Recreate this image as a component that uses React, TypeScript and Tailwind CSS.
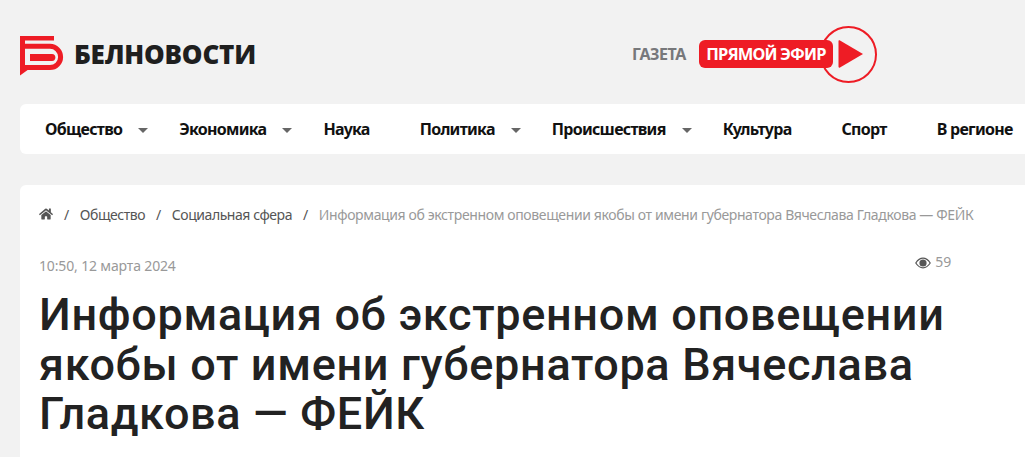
import { FaHome } from 'react-icons/fa';

const navItems = [
  { label: 'Общество', arrow: true },
  { label: 'Экономика', arrow: true },
  { label: 'Наука', arrow: false },
  { label: 'Политика', arrow: true },
  { label: 'Происшествия', arrow: true },
  { label: 'Культура', arrow: false },
  { label: 'Спорт', arrow: false },
  { label: 'В регионе', arrow: false },
];

function Logo() {
  return (
    <svg width="45" height="42" viewBox="0 0 45 42" className="mt-[3px] shrink-0">
      <path d="M0 1H34V5.5H5V34.7H8L0 40.5Z" fill="#ee1c25" />
      <path d="M5 11.3H30A10.6 10.6 0 0 1 30 32.5H5" fill="none" stroke="#ee1c25" strokeWidth="5" />
      <path d="M10 19H32C36.5 19 36.5 26 32 26H10Z" fill="#ee1c25" />
    </svg>
  );
}

function EyeIcon() {
  return (
    <svg width="16" height="12" viewBox="0 0 16 12" className="shrink-0">
      <path d="M0.8 6C3 2.6 5.3 1.2 8 1.2S13 2.6 15.2 6C13 9.4 10.7 10.8 8 10.8S3 9.4 0.8 6Z" fill="none" stroke="#555" strokeWidth="1.2" />
      <circle cx="8" cy="6" r="3.6" fill="#555" />
    </svg>
  );
}

export default function App() {
  return (
    <div className="h-[457px] overflow-hidden bg-[#f2f2f2] pl-5 font-['Noto_Sans',sans-serif]">
      <header className="flex h-[104px] items-center">
        <div className="flex w-[612px] items-center gap-[9px] pt-[4px]">
          <Logo />
          <span className="font-['Open_Sans',sans-serif] text-[26px] leading-none font-extrabold tracking-[-0.2px] text-[#1f1f1f]">
            БЕЛНОВОСТИ
          </span>
        </div>
        <div className="flex items-center pt-[4px]">
          <span className="w-[67px] text-[16px] font-bold tracking-[-0.45px] text-[#77787b]">ГАЗЕТА</span>
          <div className="relative flex h-[57px] w-[178px] items-center">
            <span className="absolute top-0 right-0 size-[57px] rounded-full border-2 border-[#ee1c25]" />
            <span className="relative flex h-[28px] w-[134px] items-center justify-center rounded-[6px] bg-[#ee1c25] text-[16.5px] font-bold tracking-[-0.85px] text-white">
              ПРЯМОЙ ЭФИР
            </span>
            <svg width="26" height="30" viewBox="0 0 26 30" className="relative ml-[5px]">
              <path d="M2 1.5L25 15L2 28.5C1 29 0.5 28.5 0.5 27.5V2.5C0.5 1.5 1 1 2 1.5Z" fill="#ee1c25" />
            </svg>
          </div>
        </div>
      </header>

      <nav className="flex h-[50px] w-[1100px] items-center rounded-[6px] bg-white pl-[25px] whitespace-nowrap">
        {navItems.map((item) => (
          <div key={item.label} className={item.arrow ? 'flex items-center pr-[31px]' : 'flex items-center pr-[50px]'}>
            <span className="text-[16px] font-bold tracking-[-0.72px] text-[#111]">{item.label}</span>
            {item.arrow && (
              <span className="mt-[2px] ml-4 h-0 w-0 border-x-[5.5px] border-t-[5px] border-x-transparent border-t-[#666]" />
            )}
          </div>
        ))}
      </nav>

      <main className="mt-[31px] h-[300px] w-[1100px] rounded-[6px] bg-white pt-[19px] pl-[19px]">
        <div className="flex h-[20px] items-center text-[14px] tracking-[-0.45px] whitespace-nowrap text-[#555]">
          <FaHome size={14} className="shrink-0 text-[#555]" />
          <span className="mx-[11px]">/</span>
          <span>Общество</span>
          <span className="mx-[11px]">/</span>
          <span>Социальная сфера</span>
          <span className="mx-[11px]">/</span>
          <span className="tracking-[-0.37px] text-[#999]">Информация об экстренном оповещении якобы от имени губернатора Вячеслава Гладкова — ФЕЙК</span>
        </div>
        <div className="mt-[31px] flex h-[20px] w-[912px] items-center justify-between text-[14px] tracking-[-0.15px] text-[#999]">
          <span>10:50, 12 марта 2024</span>
          <span className="flex items-center gap-[4px] pb-[4px]">
            <EyeIcon />
            <span className="mb-[4px]">59</span>
          </span>
        </div>
        <h1 className="mt-[15px] w-[930px] font-['Roboto',sans-serif] text-[45px] leading-[49.5px] font-medium tracking-[0.67px] text-[#222]">
          Информация об экстренном оповещении якобы от имени губернатора Вячеслава Гладкова — ФЕЙК
        </h1>
      </main>
    </div>
  );
}
